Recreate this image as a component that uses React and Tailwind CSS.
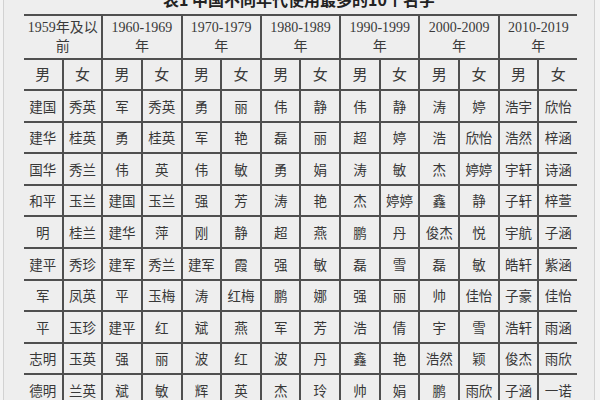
import React from 'react';

const groups = [
  ['1959年及以', '前'],
  ['1960-1969', '年'],
  ['1970-1979', '年'],
  ['1980-1989', '年'],
  ['1990-1999', '年'],
  ['2000-2009', '年'],
  ['2010-2019', '年'],
];

const rows = [
  ['建国', '秀英', '军', '秀英', '勇', '丽', '伟', '静', '伟', '静', '涛', '婷', '浩宇', '欣怡'],
  ['建华', '桂英', '勇', '桂英', '军', '艳', '磊', '丽', '超', '婷', '浩', '欣怡', '浩然', '梓涵'],
  ['国华', '秀兰', '伟', '英', '伟', '敏', '勇', '娟', '涛', '敏', '杰', '婷婷', '宇轩', '诗涵'],
  ['和平', '玉兰', '建国', '玉兰', '强', '芳', '涛', '艳', '杰', '婷婷', '鑫', '静', '子轩', '梓萱'],
  ['明', '桂兰', '建华', '萍', '刚', '静', '超', '燕', '鹏', '丹', '俊杰', '悦', '宇航', '子涵'],
  ['建平', '秀珍', '建军', '秀兰', '建军', '霞', '强', '敏', '磊', '雪', '磊', '敏', '皓轩', '紫涵'],
  ['军', '凤英', '平', '玉梅', '涛', '红梅', '鹏', '娜', '强', '丽', '帅', '佳怡', '子豪', '佳怡'],
  ['平', '玉珍', '建平', '红', '斌', '燕', '军', '芳', '浩', '倩', '宇', '雪', '浩轩', '雨涵'],
  ['志明', '玉英', '强', '丽', '波', '红', '波', '丹', '鑫', '艳', '浩然', '颖', '俊杰', '雨欣'],
  ['德明', '兰英', '斌', '敏', '辉', '英', '杰', '玲', '帅', '娟', '鹏', '雨欣', '子涵', '一诺'],
];

export default function App() {
  return (
    <div className="w-[600px] h-[400px] overflow-hidden bg-[#f3f3f3]">
      <div className="ml-[3px] w-[592px] h-full border-x border-[#d2d2d2] bg-[#eeeeee] overflow-hidden font-['Liberation_Serif','Noto_Sans_CJK_SC',serif]">
        <div className="h-[14px] overflow-hidden">
          <div className="-mt-[9px] text-center text-[16px] leading-[16px] font-bold text-[#222] font-['Noto_Sans_CJK_SC',sans-serif]">
            表1 中国不同年代使用最多的10个名字
          </div>
        </div>
        <div className="ml-[20px] w-[553px] border-t-2 border-[#4f4f4f] bg-[#4f4f4f] grid grid-cols-14 gap-[2px] text-[#3a3a3a]">
          {groups.map((g, i) => (
            <div key={i} className="col-span-2 h-[42px] bg-[#eeeeee] flex flex-col items-center justify-center text-[14px] leading-[19px]">
              <span>{g[0]}</span>
              <span>{g[1]}</span>
            </div>
          ))}
          {groups.map((g, i) => (
            <React.Fragment key={i}>
              <div className="h-[29px] bg-[#eeeeee] flex items-center justify-center text-[15px] font-['Noto_Sans_CJK_SC',sans-serif]">男</div>
              <div className="h-[29px] bg-[#eeeeee] flex items-center justify-center text-[15px] font-['Noto_Sans_CJK_SC',sans-serif]">女</div>
            </React.Fragment>
          ))}
          {rows.map((r, i) =>
            r.map((name, j) => (
              <div key={i + '-' + j} className="h-[29.6px] bg-[#eeeeee] flex items-center justify-center text-[13.5px] text-[#383838] font-['Noto_Sans_CJK_SC',sans-serif]">
                {name}
              </div>
            ))
          )}
        </div>
      </div>
    </div>
  );
}
